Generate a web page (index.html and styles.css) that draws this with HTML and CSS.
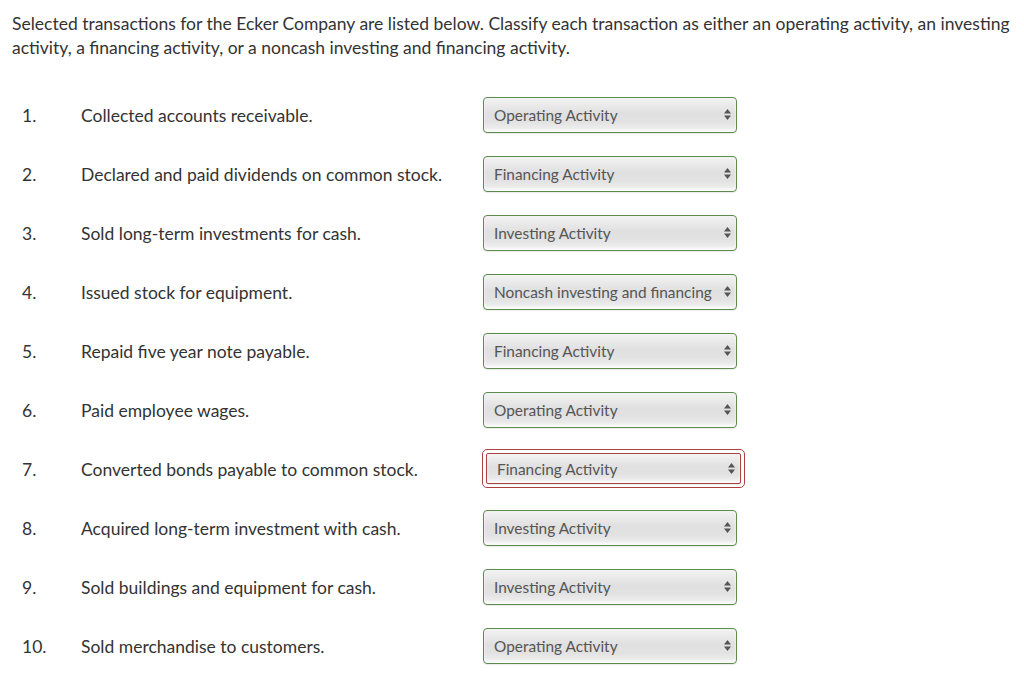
FILE: index.html
```html
<!doctype html>
<html>
<head>
    <meta charset="UTF-8">
    <title>Classify transactions</title>
    <link rel="stylesheet" href="styles.css">
</head>
<body>
<div class="page">
    <p class="intro">Selected transactions for the Ecker Company are listed below. Classify each transaction as either an operating activity, an investing activity, a financing activity, or a noncash investing and financing activity.</p>

    <div class="list">
        <div class="row">
            <div class="num">1.</div>
            <div class="txt">Collected accounts receivable.</div>
            <div class="pick"><div class="sel"><span>Operating Activity</span><svg class="arr" width="7" height="11" viewBox="0 0 7 11"><path d="M3.5 0L7 4.5H0z M3.5 11L7 6.5H0z" fill="#555"/></svg></div></div>
        </div>
        <div class="row">
            <div class="num">2.</div>
            <div class="txt">Declared and paid dividends on common stock.</div>
            <div class="pick"><div class="sel"><span>Financing Activity</span><svg class="arr" width="7" height="11" viewBox="0 0 7 11"><path d="M3.5 0L7 4.5H0z M3.5 11L7 6.5H0z" fill="#555"/></svg></div></div>
        </div>
        <div class="row">
            <div class="num">3.</div>
            <div class="txt">Sold long-term investments for cash.</div>
            <div class="pick"><div class="sel"><span>Investing Activity</span><svg class="arr" width="7" height="11" viewBox="0 0 7 11"><path d="M3.5 0L7 4.5H0z M3.5 11L7 6.5H0z" fill="#555"/></svg></div></div>
        </div>
        <div class="row">
            <div class="num">4.</div>
            <div class="txt">Issued stock for equipment.</div>
            <div class="pick"><div class="sel"><span>Noncash investing and financing</span><svg class="arr" width="7" height="11" viewBox="0 0 7 11"><path d="M3.5 0L7 4.5H0z M3.5 11L7 6.5H0z" fill="#555"/></svg></div></div>
        </div>
        <div class="row">
            <div class="num">5.</div>
            <div class="txt">Repaid five year note payable.</div>
            <div class="pick"><div class="sel"><span>Financing Activity</span><svg class="arr" width="7" height="11" viewBox="0 0 7 11"><path d="M3.5 0L7 4.5H0z M3.5 11L7 6.5H0z" fill="#555"/></svg></div></div>
        </div>
        <div class="row">
            <div class="num">6.</div>
            <div class="txt">Paid employee wages.</div>
            <div class="pick"><div class="sel"><span>Operating Activity</span><svg class="arr" width="7" height="11" viewBox="0 0 7 11"><path d="M3.5 0L7 4.5H0z M3.5 11L7 6.5H0z" fill="#555"/></svg></div></div>
        </div>
        <div class="row">
            <div class="num">7.</div>
            <div class="txt">Converted bonds payable to common stock.</div>
            <div class="pick"><div class="wrong"><div class="sel sel-bad"><span>Financing Activity</span><svg class="arr" width="7" height="11" viewBox="0 0 7 11"><path d="M3.5 0L7 4.5H0z M3.5 11L7 6.5H0z" fill="#555"/></svg></div></div></div>
        </div>
        <div class="row">
            <div class="num">8.</div>
            <div class="txt">Acquired long-term investment with cash.</div>
            <div class="pick"><div class="sel"><span>Investing Activity</span><svg class="arr" width="7" height="11" viewBox="0 0 7 11"><path d="M3.5 0L7 4.5H0z M3.5 11L7 6.5H0z" fill="#555"/></svg></div></div>
        </div>
        <div class="row">
            <div class="num">9.</div>
            <div class="txt">Sold buildings and equipment for cash.</div>
            <div class="pick"><div class="sel"><span>Investing Activity</span><svg class="arr" width="7" height="11" viewBox="0 0 7 11"><path d="M3.5 0L7 4.5H0z M3.5 11L7 6.5H0z" fill="#555"/></svg></div></div>
        </div>
        <div class="row">
            <div class="num">10.</div>
            <div class="txt">Sold merchandise to customers.</div>
            <div class="pick"><div class="sel"><span>Operating Activity</span><svg class="arr" width="7" height="11" viewBox="0 0 7 11"><path d="M3.5 0L7 4.5H0z M3.5 11L7 6.5H0z" fill="#555"/></svg></div></div>
        </div>
    </div>
</div>
</body>
</html>
```

FILE: styles.css
```css
* {
    margin: 0;
    padding: 0;
    box-sizing: border-box;
}

body {
    background: #fff;
    font-family: Lato, "Liberation Sans", sans-serif;
    color: #333;
}

.page {
    padding: 12px 0 0 12px;
}

.intro {
    font-size: 17.5px;
    line-height: 24px;
}

.list {
    margin-top: 25px;
}

.row {
    display: flex;
    align-items: center;
    height: 59px;
    font-size: 17.5px;
}

.num {
    width: 69px;
    padding: 1px 0 0 10px;
}

.txt {
    width: 402px;
    padding-top: 1px;
}

.pick {
    width: 270px;
    display: flex;
    align-items: center;
}

.sel {
    width: 254px;
    height: 36px;
    border: 1px solid #5c8d4f;
    border-radius: 4px;
    background: linear-gradient(#f3f3f3, #e0e0e0 45%, #e2e2e2 70%, #f2f2f2);
    box-shadow: inset 0 -2px 3px rgba(255, 255, 255, .8), 0 1px 1px rgba(0, 0, 0, .08);
    display: flex;
    align-items: center;
    justify-content: space-between;
    padding: 0 5px 0 10px;
    font-size: 15.4px;
    color: #555;
}

.arr {
    display: block;
}

.wrong {
    margin-left: -1px;
    border: 1px solid #b0403d;
    border-radius: 5px;
    padding: 3px;
}

.sel-bad {
    width: 255px;
    height: 31px;
    border-color: #a9423f;
    border-radius: 2px;
    padding-left: 10px;
}
```
